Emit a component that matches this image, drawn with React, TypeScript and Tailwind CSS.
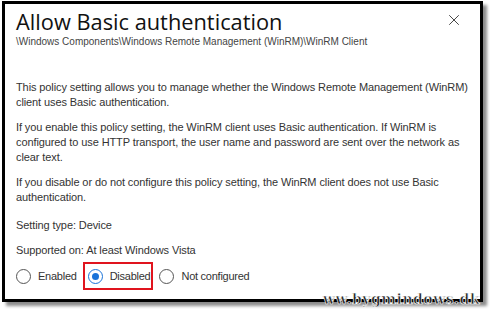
import { X } from 'lucide-react';

const font = { fontFamily: '"Liberation Sans", Arial, sans-serif' };

const Radio = ({ label, checked = false }: { label: string; checked?: boolean }) => (
  <label className="flex items-center gap-[7px] text-[11px] tracking-[-0.25px] text-[#333]">
    <span
      className={
        checked
          ? 'flex h-[15px] w-[15px] items-center justify-center rounded-full border border-[#1a73d9]'
          : 'flex h-[15px] w-[15px] items-center justify-center rounded-full border border-[#555]'
      }
    >
      {checked && <span className="h-[7px] w-[7px] rounded-full bg-[#1a73d9]" />}
    </span>
    {label}
  </label>
);

export default function App() {
  return (
    <div className="relative h-[309px] w-[490px] bg-white" style={font}>
      <div className="ml-[2px] mt-[1px] h-[301px] w-[481px] border-[3px] border-black bg-white shadow-[4px_4px_3px_rgba(0,0,0,0.45)]">
        <div className="flex items-start justify-between pl-[11px] pr-[17px] pt-[3px]">
          <div>
            <h1
              className="text-[21.8px] leading-[30px] text-[#111]"
              style={{ fontFamily: '"Open Sans", sans-serif' }}
            >
              Allow Basic authentication
            </h1>
            <div className="-mt-[1px] text-[10px] leading-[12px] text-[#444]">
              \Windows Components\Windows Remote Management (WinRM)\WinRM Client
            </div>
          </div>
          <X className="mt-[4px] h-[18px] w-[18px] text-[#333]" strokeWidth={1.2} />
        </div>

        <div className="mt-[32px] pl-[11px] pr-[12px] text-[11px] leading-[15px] tracking-[-0.1px] text-[#333]">
          <p>
            This policy setting allows you to manage whether the Windows Remote Management (WinRM) client uses Basic
            authentication.
          </p>
          <p className="mt-[10px]">
            If you enable this policy setting, the WinRM client uses Basic authentication. If WinRM is configured to
            use HTTP transport, the user name and password are sent over the network as clear text.
          </p>
          <p className="mt-[10px]">
            If you disable or do not configure this policy setting, the WinRM client does not use Basic authentication.
          </p>
          <p className="mt-[13px]">Setting type: Device</p>
          <p className="mt-[10px]">Supported on: At least Windows Vista</p>
        </div>

        <div className="mt-[4px] flex items-center pl-[11px]">
          <Radio label="Enabled" />
          <div className="ml-[6px] flex h-[28px] items-center border-2 border-[#e0141e] pl-[3px] pr-[1px]">
            <Radio label="Disabled" checked />
          </div>
          <div className="ml-[6px]">
            <Radio label="Not configured" />
          </div>
        </div>
      </div>
      <div
        className="absolute right-[10px] top-[290px] text-[14px] font-bold leading-[16px] tracking-[0.5px] text-[#222]"
        style={{ fontFamily: '"DejaVu Serif", serif', WebkitTextStroke: '0.6px white' }}
      >
        ww.bygmindows.dk
      </div>
    </div>
  );
}
